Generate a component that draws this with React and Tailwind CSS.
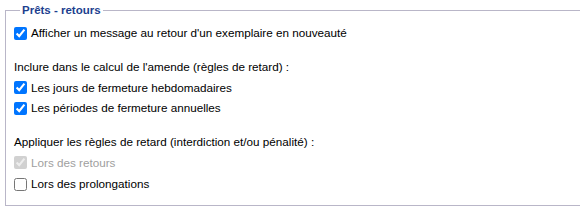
export default function App() {
  return (
    <div className="w-[580px] h-[210px] overflow-hidden bg-white font-['Liberation_Sans',sans-serif] text-[11.7px] text-black">
      <fieldset className="ml-[5px] mt-[3px] w-[600px] h-[203px] border border-[#b9b6c8] px-[8px] pt-[6px] m-0 min-w-0">
        <legend className="ml-[6px] px-[2px] text-[11.5px] leading-[14px] font-bold text-[#1d3f8f]">Prêts - retours</legend>
        <div className="flex flex-col">
          <label className="flex items-center h-5">
            <input type="checkbox" defaultChecked className="m-0 mr-[4px] w-[13px] h-[13px]" />
            <span>Afficher un message au retour d'un exemplaire en nouveauté</span>
          </label>

          <div className="mt-[13px] flex flex-col">
            <p className="h-[21px] flex items-center">Inclure dans le calcul de l'amende (règles de retard) :</p>
            <label className="flex items-center h-[21px]">
              <input type="checkbox" defaultChecked className="m-0 mr-[4px] w-[13px] h-[13px]" />
              <span>Les jours de fermeture hebdomadaires</span>
            </label>
            <label className="flex items-center h-5">
              <input type="checkbox" defaultChecked className="m-0 mr-[4px] w-[13px] h-[13px]" />
              <span>Les périodes de fermeture annuelles</span>
            </label>
          </div>

          <div className="mt-[13px] flex flex-col">
            <p className="h-[21px] flex items-center">Appliquer les règles de retard (interdiction et/ou pénalité) :</p>
            <label className="flex items-center h-[21px] text-[#a0a0a0]">
              <input type="checkbox" defaultChecked disabled className="m-0 mr-[4px] w-[13px] h-[13px]" />
              <span>Lors des retours</span>
            </label>
            <label className="flex items-center h-[22px]">
              <input type="checkbox" className="m-0 mr-[4px] w-[13px] h-[13px]" />
              <span>Lors des prolongations</span>
            </label>
          </div>
        </div>
      </fieldset>
    </div>
  );
}
